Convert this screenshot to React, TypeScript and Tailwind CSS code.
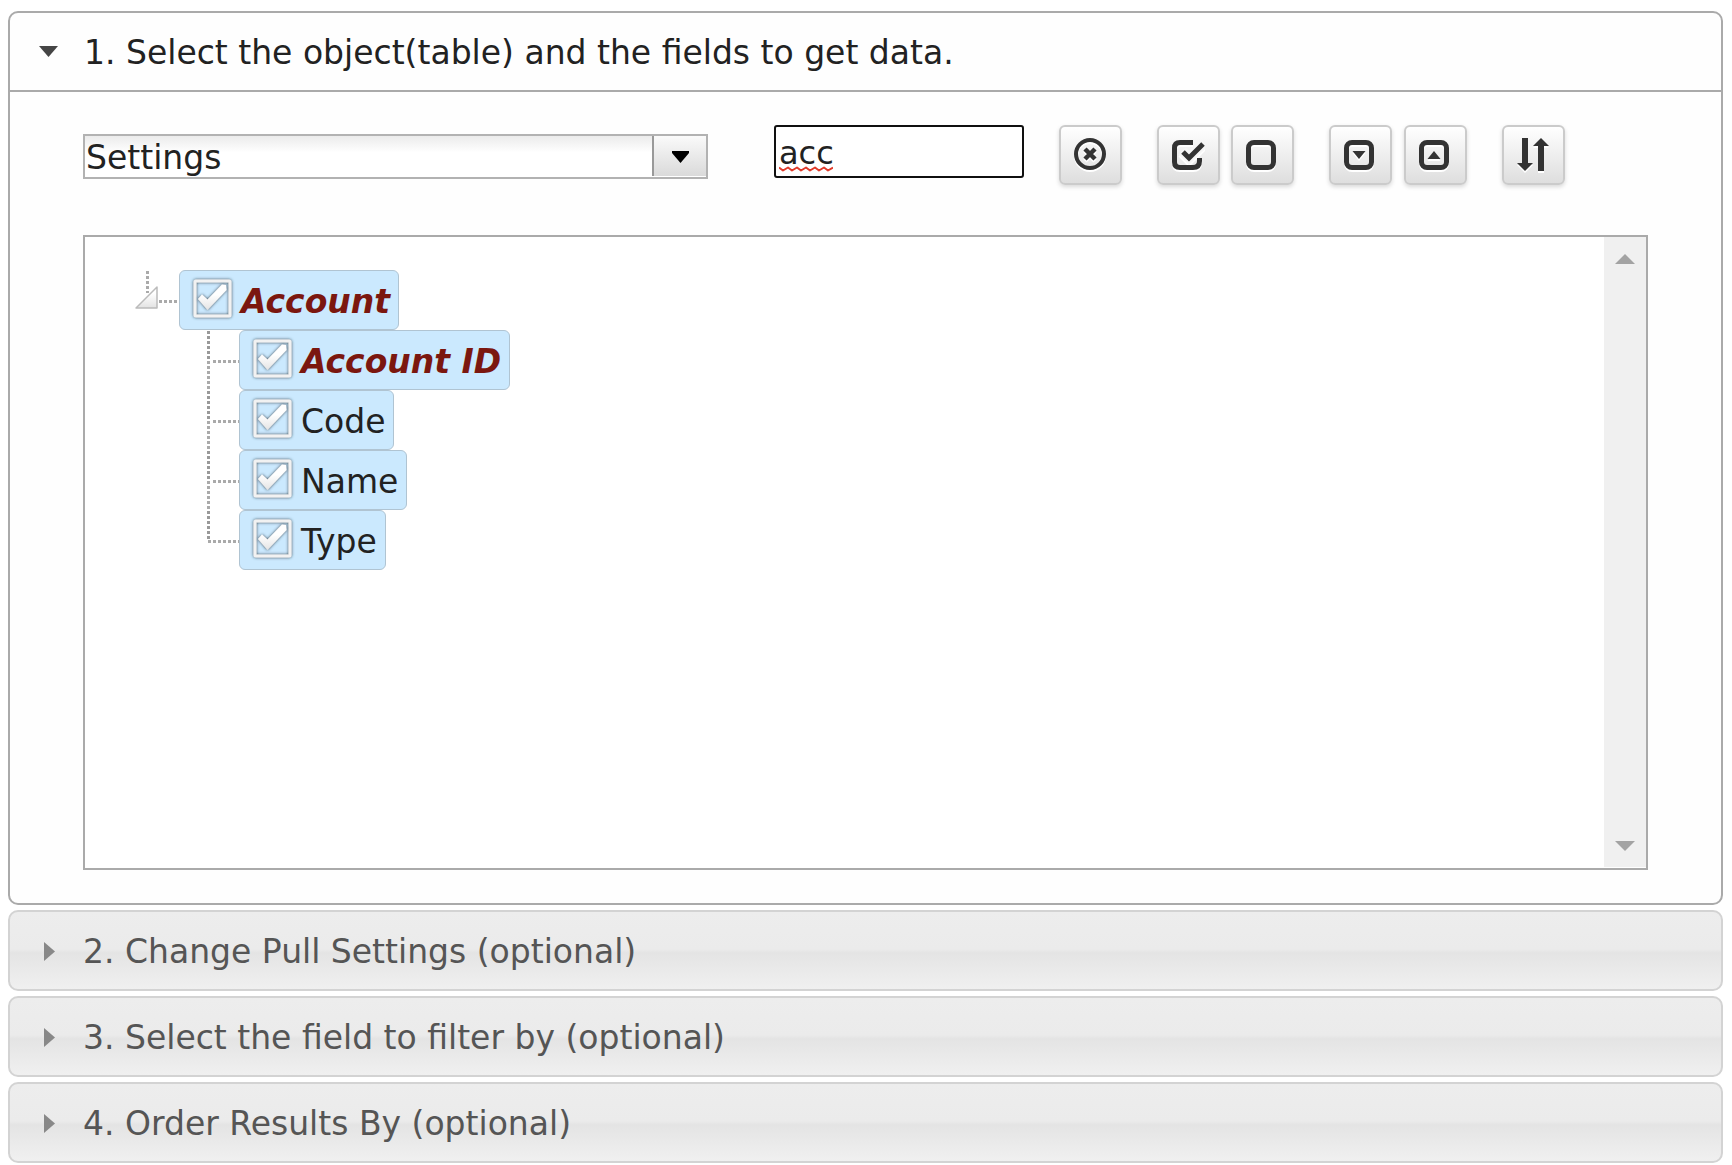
import { useState } from 'react'
import type { ReactNode } from 'react'

const FONT = "font-['DejaVu_Sans',Verdana,sans-serif]"

interface TreeField {
  label: string
  primary?: boolean
}

const fields: TreeField[] = [
  { label: 'Account ID', primary: true },
  { label: 'Code' },
  { label: 'Name' },
  { label: 'Type' },
]

const closedSections = [
  '2. Change Pull Settings (optional)',
  '3. Select the field to filter by (optional)',
  '4. Order Results By (optional)',
]

function CheckArt() {
  return (
    <svg width="40" height="40" viewBox="0 0 40 40" className="pointer-events-none absolute inset-0 overflow-visible" aria-hidden="true">
      <defs>
        <filter id="soft" x="-20%" y="-20%" width="140%" height="140%">
          <feDropShadow dx="0" dy="0" stdDeviation="1.5" floodColor="#2c3a46" floodOpacity="1" />
        </filter>
        <linearGradient id="tick" x1="0" y1="0" x2="0" y2="1">
          <stop offset="0.4" stopColor="#ffffff" />
          <stop offset="1" stopColor="#e4e4e4" />
        </linearGradient>
      </defs>
      <rect x="3" y="3" width="35" height="35" rx="1" fill="none" stroke="#f2f2f2" strokeWidth="3" filter="url(#soft)" />
      <path d="M6 21 L10 16.5 L15.500 21.500 L30 6.500 L34 7 L34.500 12 L15.500 32 Z" fill="url(#tick)" filter="url(#soft)" />
    </svg>
  )
}

function TreeNode({ label, primary }: TreeField) {
  const [checked, setChecked] = useState(true)
  return (
    <label className="flex h-[60px] w-fit items-center rounded-md border border-[#b0c4d2] bg-[#cbe9fe] px-2 pl-3">
      <span className="relative mr-[9px] mb-1 block size-10">
        <input
          type="checkbox"
          checked={checked}
          onChange={e => setChecked(e.target.checked)}
          className="absolute inset-0 size-10 appearance-none"
        />
        {checked && <CheckArt />}
      </span>
      <span className={primary ? 'pt-[3px] font-bold text-[#7b170f] italic' : 'pt-[3px] text-[#222]'}>{label}</span>
    </label>
  )
}

// dotted guide lines, the last child stops at its own row
function Connector({ last }: { last: boolean }) {
  return (
    <svg width="32" height="60" viewBox="0 0 32 60" className="shrink-0" aria-hidden="true">
      <path d="M1.500 1 V31" stroke="#999" strokeWidth="3" strokeDasharray="3 2" />
      {!last && <path d="M1.500 31 V60" stroke="#aaa" strokeWidth="3" strokeDasharray="3 2" />}
      <path d={last ? 'M1 31.500 H32' : 'M6 31.500 H32'} stroke="#aaa" strokeWidth="3" strokeDasharray="3 2" />
    </svg>
  )
}

interface ToolButtonProps {
  title: string
  onClick?: () => void
  children: ReactNode
}

function ToolButton({ title, onClick, children }: ToolButtonProps) {
  return (
    <button
      type="button"
      title={title}
      aria-label={title}
      onClick={onClick}
      className="flex h-[60px] w-[63px] items-center justify-center rounded-md border-2 border-[#cbcbcb] bg-linear-to-b from-white to-[#dedede] pr-[3px] shadow-[0_2px_4px_#00000026]"
    >
      <svg width="36" height="36" viewBox="0 0 36 36" className="drop-shadow-[0_2px_0_#fff]" aria-hidden="true">
        {children}
      </svg>
    </button>
  )
}

export default function App() {
  const [filter, setFilter] = useState('acc')

  return (
    <main className={`${FONT} flex flex-col gap-[5px] bg-white pt-[11px] pr-[9px] pb-0.5 pl-2 text-[33px] leading-10 text-[#222]`}>
      <section className="rounded-[10px] border-2 border-[#aaa] bg-[#fefefe]">
        <h3 className="border-b-2 border-[#aaa]">
          <button type="button" aria-expanded="true" className="flex h-[77px] w-full items-center pl-[29px] text-left">
            <svg width="20" height="12" viewBox="0 0 20 12" aria-hidden="true">
              <path d="M0 0 H19 L9.500 11 Z" fill="#454545" />
            </svg>
            <span className="ml-[25px] pt-0.5">1. Select the object(table) and the fields to get data.</span>
          </button>
        </h3>

        <div className="px-[73px] py-[33px]">
          <div className="flex items-start">
            <div className="relative mt-[9px] h-[45px] w-[625px]">
              <select
                aria-label="Object"
                className="h-full w-full appearance-none border-2 border-[#b2b2b2] bg-linear-to-b from-[#ebebeb] to-white to-40% pt-0.5 pl-px"
              >
                <option>Settings</option>
              </select>
              <span className="pointer-events-none absolute top-[2px] right-[2px] flex h-10 w-[54px] items-center justify-center border-l-2 border-[#999] bg-linear-to-b from-[#fafafa] to-[#dadada] pt-0.5">
                <svg width="18" height="12" viewBox="0 0 18 12" aria-hidden="true">
                  <path d="M1 0 H18 V2 L9.500 12 L1 2 Z" fill="#000" />
                </svg>
              </span>
            </div>

            <div className="relative ml-[66px] h-[53px] w-[250px]">
              <input
                type="text"
                aria-label="Filter fields"
                value={filter}
                spellCheck={false}
                onChange={e => setFilter(e.target.value)}
                className="h-full w-full rounded-[3px] border-2 border-[#101010] bg-white pt-0.5 pl-[3px] text-[32px] outline-none"
              />
              {filter === 'acc' && (
                <svg width="54" height="6" viewBox="0 0 54 6" className="pointer-events-none absolute top-[41px] left-[5px]" aria-hidden="true">
                  <path
                    d="M0 1.500 L4 4.500 L9 1.500 L13 4.500 L18 1.500 L22 4.500 L27 1.500 L31 4.500 L36 1.500 L40 4.500 L45 1.500 L49 4.500 L54 1.500"
                    fill="none"
                    stroke="#e03a2a"
                    strokeWidth="2"
                    strokeLinejoin="round"
                  />
                </svg>
              )}
            </div>

            <div className="ml-[35px] flex gap-[35px]">
              <ToolButton title="Clear filter" onClick={() => setFilter('')}>
                <circle cx="19" cy="17" r="14" fill="none" stroke="#333" strokeWidth="4" />
                <path d="M14 12 L24 22 M24 12 L14 22" stroke="#333" strokeWidth="4.500" />
              </ToolButton>
              <div className="flex gap-[11px]">
                <ToolButton title="Select all">
                  <path d="M24 5.500 H11 Q5.500 5.500 5.500 11 V25 Q5.500 30.500 11 30.500 H24 Q30.500 30.500 30.500 24 V21" fill="none" stroke="#333" strokeWidth="5" />
                  <path d="M13 14 L20 21 L34 7" fill="none" stroke="#f6f6f6" strokeWidth="10" />
                  <path d="M14 15 L20 21 L34 7" fill="none" stroke="#333" strokeWidth="5" />
                </ToolButton>
                <ToolButton title="Deselect all">
                  <rect x="5.500" y="5.500" width="25" height="25" rx="5.500" fill="none" stroke="#333" strokeWidth="5" />
                </ToolButton>
              </div>
              <div className="flex gap-3">
                <ToolButton title="Expand all">
                  <rect x="5.500" y="5.500" width="25" height="25" rx="5.500" fill="none" stroke="#333" strokeWidth="5" />
                  <path d="M11.500 14 H24.500 L18 22 Z" fill="#333" />
                </ToolButton>
                <ToolButton title="Collapse all">
                  <rect x="5.500" y="5.500" width="25" height="25" rx="5.500" fill="none" stroke="#333" strokeWidth="5" />
                  <path d="M11.500 22 H24.500 L18 14 Z" fill="#333" />
                </ToolButton>
              </div>
              <ToolButton title="Sort">
                <path d="M8 1 H14 V26 H19 L11 34 L3 26 H8 Z" fill="#333" />
                <path d="M24 34 V9 H19 L27 1 L35 9 H30 V34 Z" fill="#333" />
              </ToolButton>
            </div>
          </div>

          <div className="mt-[50px] flex h-[635px] border-2 border-[#aaa] bg-white">
            <ul className="flex-1 pt-[33px] pl-[50px]">
              <li>
                <div className="flex">
                  <button type="button" aria-label="Collapse Account" className="h-[60px] w-11">
                    <svg width="44" height="60" viewBox="0 0 44 60" aria-hidden="true">
                      <defs>
                        <linearGradient id="fold" x1="0" y1="0" x2="0" y2="1">
                          <stop offset="0.3" stopColor="#fff" />
                          <stop offset="1" stopColor="#e2e2e2" />
                        </linearGradient>
                      </defs>
                      <path d="M12.500 1 V23" stroke="#aaa" strokeWidth="3" strokeDasharray="3 2" />
                      <path d="M24 31.500 H44" stroke="#aaa" strokeWidth="3" strokeDasharray="3 2" />
                      <path d="M22 17 V38 H1 Z" fill="url(#fold)" stroke="#bbb" strokeWidth="1.500" strokeLinejoin="round" />
                    </svg>
                  </button>
                  <TreeNode label="Account" primary />
                </div>
                <ul className="pl-[72px]">
                  {fields.map((field, i) => (
                    <li key={field.label} className="flex">
                      <Connector last={i === fields.length - 1} />
                      <TreeNode label={field.label} primary={field.primary} />
                    </li>
                  ))}
                </ul>
              </li>
            </ul>
            <div className="mb-px flex w-[42px] flex-col items-center justify-between bg-[#f0f0f0] pt-[17px] pb-4">
              <svg width="20" height="10" viewBox="0 0 20 10" aria-hidden="true">
                <path d="M10 0 L20 10 H0 Z" fill="#a3a3a3" />
              </svg>
              <svg width="20" height="10" viewBox="0 0 20 10" aria-hidden="true">
                <path d="M0 0 H20 L10 10 Z" fill="#a3a3a3" />
              </svg>
            </div>
          </div>
        </div>
      </section>

      {closedSections.map(title => (
        <h3 key={title}>
          <button
            type="button"
            aria-expanded="false"
            className="flex h-[81px] w-full items-center rounded-[10px] border-2 border-[#d3d3d3] bg-[linear-gradient(#ededed,#ebebeb_48%,#e4e4e4_53%,#f0f0f0)] pl-[34px] text-left text-[#555]"
          >
            <svg width="11" height="20" viewBox="0 0 11 20" aria-hidden="true">
              <path d="M0 1 L11 10.500 L0 20 Z" fill="#888" />
            </svg>
            <span className="ml-7 pt-0.5">{title}</span>
          </button>
        </h3>
      ))}
    </main>
  )
}
